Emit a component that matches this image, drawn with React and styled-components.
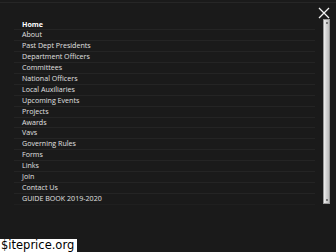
import React from "react";
import styled, { createGlobalStyle } from "styled-components";

const Global = createGlobalStyle`
  html, body { margin: 0; padding: 0; background: #1a1a1a; }
  body { width: 336px; height: 252px; overflow: hidden; font-family: "Open Sans", "DejaVu Sans", sans-serif; }
`;

const Page = styled.div`
  position: relative;
  width: 336px;
  height: 252px;
  background: #1a1a1a;
  box-sizing: border-box;
  padding-top: 2px;
  display: flex;
  flex-direction: column;
`;

const TopRule = styled.div`
  height: 1px;
  background: #262626;
`;

const Body = styled.div`
  display: flex;
  flex-direction: row;
  padding: 4px 6px 0 14px;
`;

const Menu = styled.ul`
  flex: 1;
  list-style: none;
  margin: 12.5px 3px 0 0;
  padding: 0;
  display: flex;
  flex-direction: column;
`;

const Item = styled.li`
  height: 10.9px;
  box-sizing: border-box;
  border-bottom: 1px solid #242424;
  padding-left: 8px;
  font-size: 7.1px;
  line-height: 9.9px;
  color: ${p => (p.$active ? "#ffffff" : "#e0e0e0")};
  font-weight: ${p => (p.$active ? 700 : 400)};
  white-space: nowrap;
  &:last-child { border-bottom-color: #1f1f1f; }
`;

const Side = styled.div`
  width: 12px;
  display: flex;
  flex-direction: column;
  align-items: flex-end;
`;

const Close = styled.div`
  width: 12px;
  height: 12px;
  display: flex;
`;

const Scrollbar = styled.div`
  position: relative;
  width: 7px;
  height: 185px;
  background: linear-gradient(to right, #f0f0f0 0, #d6d6d6 40%, #bdbdbd 100%);
  box-sizing: border-box;
  border: 1px solid #9a9a9a;
`;

const Nub = styled.div`
  position: absolute;
  left: 2px;
  width: 2px;
  height: 2px;
  background: #777;
  ${p => (p.$bottom ? "bottom: 2px;" : "top: 2px;")}
`;

const Watermark = styled.div`
  position: absolute;
  left: 0;
  bottom: 0;
  height: 13px;
  padding: 0 3px 0 1px;
  background: #ffffff;
  color: #000;
  font-family: "DejaVu Sans", sans-serif;
  font-size: 11.5px;
  line-height: 13px;
`;

const items = [
  "Home",
  "About",
  "Past Dept Presidents",
  "Department Officers",
  "Committees",
  "National Officers",
  "Local Auxiliaries",
  "Upcoming Events",
  "Projects",
  "Awards",
  "Vavs",
  "Governing Rules",
  "Forms",
  "Links",
  "Join",
  "Contact Us",
  "GUIDE BOOK 2019-2020",
];

export default function App() {
  return (
    <Page>
      <Global />
      <TopRule />
      <Body>
        <Menu>
          {items.map((t, i) => (
            <Item key={t} $active={i === 0}>{t}</Item>
          ))}
        </Menu>
        <Side>
          <Close>
            <svg width="12" height="12" viewBox="0 0 12 12">
              <path d="M1 1 L11 11 M11 1 L1 11" stroke="#f2f2f2" strokeWidth="1.3" fill="none" />
            </svg>
          </Close>
          <Scrollbar>
            <Nub />
            <Nub $bottom />
          </Scrollbar>
        </Side>
      </Body>
      <Watermark>$iteprice.org</Watermark>
    </Page>
  );
}
